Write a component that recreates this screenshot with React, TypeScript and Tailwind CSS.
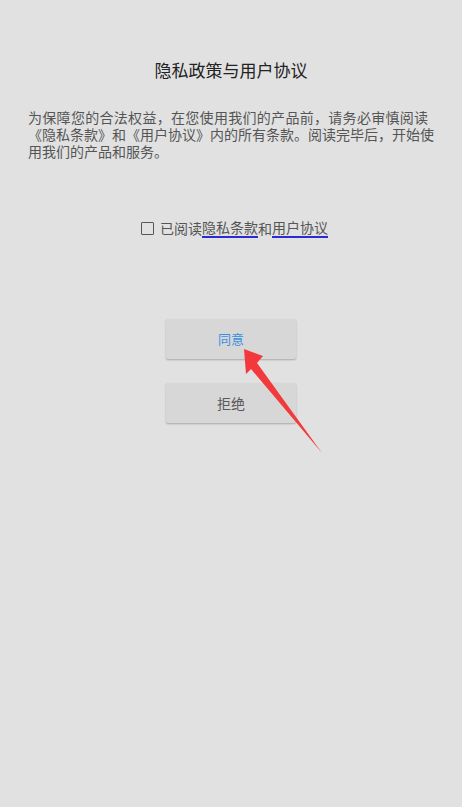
import React from "react";

export default function App() {
  const font = { fontFamily: '"Noto Sans CJK SC", "Noto Sans", sans-serif' };
  return (
    <div
      className="relative w-[462px] h-[807px] bg-[#e1e1e1] flex flex-col items-center overflow-hidden"
      style={font}
    >
      <h1 className="mt-[58px] text-[17px] leading-[24px] text-[#222] font-normal">
        隐私政策与用户协议
      </h1>
      <p className="self-stretch mt-[27px] px-[28px] text-[14px] leading-[17px] text-[#555]">
        <span className="tracking-[0.3px]">为保障您的合法权益，在您使用我们的产品前，请务必审慎阅读</span>
        <br />
        《隐私条款》和《用户协议》内的所有条款。阅读完毕后，开始使
        <br />
        用我们的产品和服务。
      </p>
      <div className="mt-[58px] ml-[7px] flex items-center text-[14px] leading-[20px] text-[#555]">
        <span className="w-[13px] h-[13px] border-[1.5px] border-[#555] rounded-[1px] mr-[6px]" />
        <span>已阅读</span>
        <span className="border-b-2 border-[#2b2bd6] leading-[18px]">隐私条款</span>
        <span>和</span>
        <span className="border-b-2 border-[#2b2bd6] leading-[18px]">用户协议</span>
      </div>
      <button className="mt-[81px] w-[130px] h-[40px] bg-[#d7d7d7] rounded-[2px] shadow-[0_1px_2px_rgba(0,0,0,0.25)] text-[13px] text-[#3d8fe0]">
        同意
      </button>
      <button className="mt-[24px] w-[130px] h-[40px] bg-[#d7d7d7] rounded-[2px] shadow-[0_1px_2px_rgba(0,0,0,0.25)] text-[14px] text-[#5a5a5a]">
        拒绝
      </button>
      <svg
        className="absolute left-0 top-0 pointer-events-none"
        width="462"
        height="807"
        viewBox="0 0 462 807"
      >
        <polygon
          points="244,349 263,356 257,363 322,453 251,369 246,374"
          fill="#f23a3c"
        />
      </svg>
    </div>
  );
}
